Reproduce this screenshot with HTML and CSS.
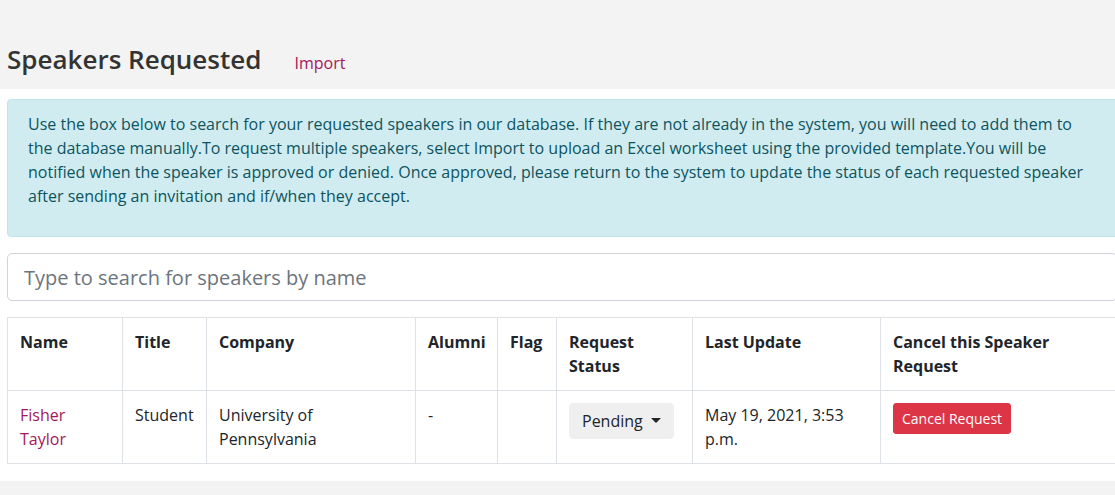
FILE: index.html
```html
<!DOCTYPE html>
<html lang="en">
<head>
  <meta charset="UTF-8" />
  <meta name="viewport" content="width=device-width, initial-scale=1.0" />
  <link rel="stylesheet" href="styles.css">
</head>
<body>
  <header class="page-header">
    <h2 class="page-title">Speakers Requested</h2>
    <a href="#" class="header-link">Import</a>
  </header>

  <main class="content">
    <div class="alert">
      <p>Use the box below to search for your requested speakers in our database. If they are not already in the system, you will need to add them to the database manually.To request multiple speakers, select Import to upload an Excel worksheet using the provided template.You will be notified when the speaker is approved or denied. Once approved, please return to the system to update the status of each requested speaker after sending an invitation and if/when they accept.</p>
    </div>

    <input type="text" class="search" placeholder="Type to search for speakers by name" />

    <table class="speakers">
      <colgroup>
        <col style="width:115px">
        <col style="width:84px">
        <col style="width:209px">
        <col style="width:82px">
        <col style="width:59px">
        <col style="width:136px">
        <col style="width:188px">
        <col style="width:240px">
      </colgroup>
      <thead>
        <tr>
          <th>Name</th>
          <th>Title</th>
          <th>Company</th>
          <th>Alumni</th>
          <th>Flag</th>
          <th>Request Status</th>
          <th>Last Update</th>
          <th>Cancel this Speaker Request</th>
        </tr>
      </thead>
      <tbody>
        <tr>
          <td><a href="#">Fisher Taylor</a></td>
          <td>Student</td>
          <td>University of Pennsylvania</td>
          <td>-</td>
          <td></td>
          <td><button type="button" class="btn-status">Pending</button></td>
          <td>May 19, 2021, 3:53 p.m.</td>
          <td><button type="button" class="btn-cancel">Cancel Request</button></td>
        </tr>
      </tbody>
    </table>
  </main>
  <div class="page-footer"></div>
</body>
</html>
```

FILE: styles.css
```css
html, body {
  overflow: hidden;
}

body {
  margin: 0;
  font-family: "Open Sans", sans-serif;
  font-size: 16px;
  line-height: 1.5;
  color: #212529;
  background: #f3f3f3;
}

a {
  color: #a3175a;
  text-decoration: none;
}

.page-header {
  display: flex;
  align-items: baseline;
  gap: 33px;
  height: 89px;
  padding: 0 0 0 7px;
  box-sizing: border-box;
  background: #f3f3f3;
}

.page-title {
  margin: 44px 0 0;
  font-size: 26px;
  font-weight: 600;
  line-height: 1.2;
  color: #333;
}

.header-link {
  font-size: 16px;
}

.content {
  background: #fff;
  padding: 10px 0 1px 7px;
  width: 1125px;
}

.alert {
  padding: 12px 20px;
  margin-bottom: 16px;
  background: #d1ecf1;
  border: 1px solid #bee5eb;
  border-radius: 4px;
  color: #0c5460;
}

.alert p {
  margin: 0 24px 16px 0;
}

.search {
  display: block;
  width: 1110px;
  height: 48px;
  box-sizing: border-box;
  margin-bottom: 16px;
  padding: 8px 16px;
  font-family: inherit;
  font-size: 20px;
  color: #495057;
  border: 1px solid #ced4da;
  border-radius: 5px;
}

.search::placeholder {
  color: #6c757d;
}

.speakers {
  table-layout: fixed;
  width: 1113px;
  border-collapse: collapse;
  margin-bottom: 16px;
}

.speakers th,
.speakers td {
  padding: 12px;
  border: 1px solid #dee2e6;
  text-align: left;
  vertical-align: top;
}

.speakers th {
  font-weight: 700;
}

.btn-status {
  font-family: inherit;
  font-size: 16px;
  line-height: 1.5;
  color: #212529;
  background: #efefef;
  border: 1px solid #efefef;
  border-radius: 4px;
  padding: 5px 12px;
}

.btn-status::after {
  content: "";
  display: inline-block;
  margin-left: 8px;
  vertical-align: 4px;
  border-top: 5px solid #212529;
  border-left: 5px solid transparent;
  border-right: 5px solid transparent;
}

.btn-cancel {
  font-family: inherit;
  font-size: 14px;
  line-height: 1.5;
  color: #fff;
  background: #dc3545;
  border: 1px solid #dc3545;
  border-radius: 3px;
  padding: 4px 8px;
}

.page-footer {
  height: 14px;
  background: #f3f3f3;
}
```
